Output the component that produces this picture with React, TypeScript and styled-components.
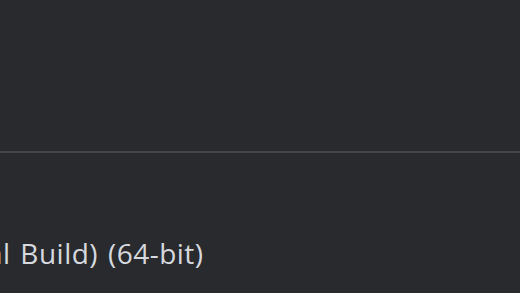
import styled, { createGlobalStyle } from "styled-components";

const GlobalStyle = createGlobalStyle`
  html, body {
    margin: 0;
    padding: 0;
    background: #292a2e;
  }
  body {
    font-family: "Open Sans", "Liberation Sans", sans-serif;
  }
`;

const Page = styled.main`
  width: 520px;
  height: 293px;
  overflow: hidden;
  display: flex;
  flex-direction: column;
  background: #292a2e;
`;

const TopArea = styled.section`
  height: 151px;
  flex-shrink: 0;
  border-bottom: 2px solid #45464a;
`;

const InfoArea = styled.section`
  display: flex;
  flex-direction: column;
  padding-top: 82px;
`;

const VersionLine = styled.div`
  color: #d6d9de;
  font-size: 28px;
  line-height: 36px;
  letter-spacing: 0.5px;
  word-spacing: 2px;
  white-space: nowrap;
  margin-left: -93px;
`;

export default function App() {
  return (
    <>
      <GlobalStyle />
      <Page>
        <TopArea />
        <InfoArea>
          <VersionLine>(Official Build) (64-bit)</VersionLine>
        </InfoArea>
      </Page>
    </>
  );
}
